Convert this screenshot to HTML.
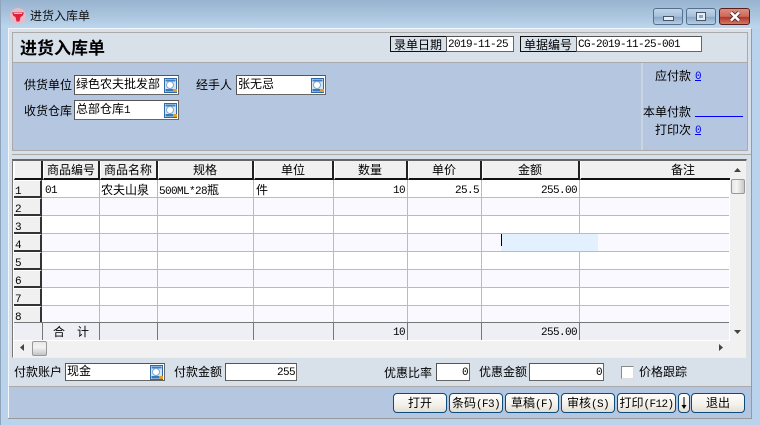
<!DOCTYPE html>
<html><head><meta charset="utf-8"><style>
html,body{margin:0;padding:0;background:#b9d3ec}
#w{position:relative;width:760px;height:425px;overflow:hidden;background:#b9d3ec;font:12px/16px "WenQuanYi Zen Hei","Noto Sans CJK SC",sans-serif;color:#000}
#w div,#w svg{position:absolute}
.r{box-sizing:border-box}
.t{position:absolute;white-space:nowrap;height:16px}
.m{font:11px/16px "Liberation Mono",monospace;letter-spacing:-.6px}
.t.m{margin-top:1px}
.i{background:#fff;box-sizing:border-box;border:1px solid #666;border-top-color:#555;border-left-color:#555}
.lb{box-sizing:border-box;background:#d8e0ea;border:1px solid #111;border-right-color:#fff;border-bottom-color:#111;height:16px;width:57px;text-align:center;line-height:15px;text-indent:-1px}
.h{box-sizing:border-box;top:161px;height:19px;background:#f0f0f0;border-bottom:2px solid #111;border-right:2px solid #222;border-left:1px solid #fff}
.n{box-sizing:border-box;left:14px;width:28px;height:18px;background:#f0f0f0;border-right:2px solid #333;border-bottom:2px solid #333;border-top:1px solid #fff}
.hl{left:42px;width:687px;height:1px;background:#bbb}
.vl{top:180px;width:1px;height:143px;background:#bbb}
.fv{top:323px;width:1px;height:17px;background:#777}
.alt{left:42px;width:687px;height:17px;background:#f9f9ff}
.b{box-sizing:border-box;top:393px;height:20px;border:1px solid #0b4a7a;border-radius:4px;background:linear-gradient(#fdfdfc,#f3f1ea 60%,#e2ded2);text-align:center;line-height:18px}
.th{box-sizing:border-box;background:linear-gradient(90deg,#e6e6e6,#f5f5f5 40%,#c8c8c8);border:1px solid #999;border-radius:2px}
.wb{box-sizing:border-box;top:8px;height:17px;border:1px solid #54708f;border-radius:3px;background:linear-gradient(#c0d4e8,#a6c0da 50%,#8aa8c6 55%,#b6cde2)}
a{color:#00f;text-decoration:underline}
</style></head><body><div id="w">
<svg width="0" height="0" style="left:0;top:0"><defs><symbol id="q" viewBox="0 0 13 15"><rect x=".5" y=".5" width="12" height="14" fill="#d6e6f6" stroke="#2f68a8"/><rect x="1.5" y="1.5" width="10" height="2" fill="#3f7fc0"/><rect x="1.5" y="11" width="10" height="2.5" fill="#3a78b8"/><circle cx="6" cy="7" r="3.5" fill="#fff" stroke="#7fa8d0"/><rect x="9" y="11" width="4" height="3" fill="#e0a030"/></symbol></defs></svg>

<!-- title bar -->
<div style="left:0;top:0;width:760px;height:28px;background:linear-gradient(#98b3cf,#a9c3dc 50%,#bcd6ee)"></div>
<div style="left:0;top:0;width:1px;height:425px;background:#8fa5bb"></div>
<svg style="left:10px;top:8px" width="16" height="16" viewBox="0 0 16 16"><circle cx="8" cy="8" r="8" fill="#e9b9c6"/><path d="M2 4.5h12l-1.5 3.5-2 1-1 4.5h-3l-1-4.5-2-1z" fill="#e0203c"/><path d="M4 5.5h8" stroke="#f6c0c8"/></svg>
<span class="t" style="left:30px;top:8px;color:#111">进货入库单</span>

<div class="wb" style="left:653px;width:30px"></div>
<div style="left:663px;top:16px;width:11px;height:5px;box-sizing:border-box;background:#e8eef4;border:1px solid #46566a"></div>
<div class="wb" style="left:686px;width:30px"></div>
<div style="left:696px;top:12px;width:10px;height:9px;box-sizing:border-box;background:#e8eef4;border:1px solid #46566a"></div>
<div style="left:699px;top:15px;width:4px;height:3px;background:#8aa8c6"></div>
<div class="wb" style="left:719px;width:31px;border-color:#5a1f1c;background:linear-gradient(#dc8d80,#cc6a5c 50%,#b4352a 55%,#cf7a66)"></div>
<svg style="left:728px;top:11px" width="14" height="11" viewBox="0 0 14 11"><path d="M3 1.5l8 8M11 1.5l-8 8" stroke="#4a2a28" stroke-width="4.2"/><path d="M3 1.5l8 8M11 1.5l-8 8" stroke="#fff" stroke-width="2.6"/></svg>

<!-- outer form -->
<div style="left:8px;top:28px;width:744px;height:391px;box-sizing:border-box;background:#d8e0ea;border:1px solid #f4f6f9;border-right-color:#999;border-bottom-color:#999"></div>
<div style="left:12px;top:32px;width:736px;height:119px;box-sizing:border-box;background:#d8e0ea;border:1px solid #aaa"></div>
<div style="left:13px;top:62px;width:734px;height:1px;background:#aaa"></div>
<div style="left:13px;top:63px;width:734px;height:87px;background:#b5c6e0"></div>
<div style="left:641px;top:63px;width:2px;height:87px;background:#ccd4de"></div>
<div style="left:12px;top:154px;width:739px;height:1px;background:#aaa"></div>

<span class="t" style="left:20px;top:37px;height:20px;font:bold 17px/20px 'WenQuanYi Zen Hei','Noto Sans CJK SC',sans-serif">进货入库单</span>

<div class="lb" style="left:390px;top:36px">录单日期</div>
<div class="i" style="left:446px;top:36px;width:68px;height:16px"></div>
<span class="t m" style="left:448px;top:36px">2019-11-25</span>
<div class="lb" style="left:520px;top:36px">单据编号</div>
<div class="i" style="left:576px;top:36px;width:126px;height:16px"></div>
<span class="t m" style="left:578px;top:36px">CG-2019-11-25-001</span>

<span class="t" style="left:24px;top:77px">供货单位</span>
<div class="i" style="left:74px;top:75px;width:105px;height:20px"></div>
<span class="t" style="left:76px;top:76px">绿色农夫批发部</span>
<svg style="left:164px;top:78px" width="13" height="15"><use href="#q"/></svg>
<span class="t" style="left:196px;top:77px">经手人</span>
<div class="i" style="left:236px;top:75px;width:90px;height:20px"></div>
<span class="t" style="left:238px;top:76px">张无忌</span>
<svg style="left:311px;top:78px" width="13" height="15"><use href="#q"/></svg>
<span class="t" style="left:24px;top:103px">收货仓库</span>
<div class="i" style="left:74px;top:100px;width:105px;height:20px"></div>
<span class="t" style="left:76px;top:101px">总部仓库<span class="m">1</span></span>
<svg style="left:164px;top:103px" width="13" height="15"><use href="#q"/></svg>

<span class="t" style="left:655px;top:68px">应付款</span><a class="t m" style="left:695px;top:68px">0</a>
<span class="t" style="left:643px;top:104px">本单付款</span>
<div style="left:695px;top:116px;width:48px;height:1px;background:#00f"></div>
<span class="t" style="left:655px;top:122px">打印次</span><a class="t m" style="left:695px;top:122px">0</a>

<!-- grid -->
<div style="left:12px;top:159px;width:735px;height:199px;box-sizing:border-box;background:#fff;border:1px solid #777;border-right-color:#ddd;border-bottom-color:#eee;border-top:2px solid #666"></div>
<div class="alt" style="top:198px"></div>
<div class="alt" style="top:234px"></div>
<div class="alt" style="top:270px"></div>
<div class="alt" style="top:306px"></div>
<div class="hl" style="top:197px"></div><div class="hl" style="top:215px"></div><div class="hl" style="top:233px"></div><div class="hl" style="top:251px"></div><div class="hl" style="top:269px"></div><div class="hl" style="top:287px"></div><div class="hl" style="top:305px"></div>
<div class="vl" style="left:99px"></div><div class="vl" style="left:157px"></div><div class="vl" style="left:253px"></div><div class="vl" style="left:333px"></div><div class="vl" style="left:407px"></div><div class="vl" style="left:481px"></div><div class="vl" style="left:579px"></div>

<div class="h" style="left:14px;width:29px"></div>
<div class="h" style="left:43px;width:57px"></div>
<div class="h" style="left:100px;width:58px"></div>
<div class="h" style="left:158px;width:96px"></div>
<div class="h" style="left:254px;width:80px"></div>
<div class="h" style="left:334px;width:74px"></div>
<div class="h" style="left:408px;width:74px"></div>
<div class="h" style="left:482px;width:98px"></div>
<div class="h" style="left:580px;width:150px;border-right:0"></div>
<span class="t" style="left:47px;top:162px">商品编号</span>
<span class="t" style="left:104px;top:162px">商品名称</span>
<span class="t" style="left:193px;top:162px">规格</span>
<span class="t" style="left:281px;top:162px">单位</span>
<span class="t" style="left:358px;top:162px">数量</span>
<span class="t" style="left:432px;top:162px">单价</span>
<span class="t" style="left:518px;top:162px">金额</span>
<span class="t" style="left:671px;top:162px">备注</span>

<div class="n" style="top:180px"></div><div class="n" style="top:198px"></div><div class="n" style="top:216px"></div><div class="n" style="top:234px"></div><div class="n" style="top:252px"></div><div class="n" style="top:270px"></div><div class="n" style="top:288px"></div><div class="n" style="top:306px"></div>
<span class="t m" style="left:15px;top:183px">1</span>
<span class="t m" style="left:15px;top:201px">2</span>
<span class="t m" style="left:15px;top:219px">3</span>
<span class="t m" style="left:15px;top:237px">4</span>
<span class="t m" style="left:15px;top:255px">5</span>
<span class="t m" style="left:15px;top:273px">6</span>
<span class="t m" style="left:15px;top:291px">7</span>
<span class="t m" style="left:15px;top:309px">8</span>

<span class="t m" style="left:45px;top:182px">01</span>
<span class="t" style="left:101px;top:182px">农夫山泉</span>
<span class="t" style="left:159px;top:182px"><span class="m">500ML*28</span>瓶</span>
<span class="t" style="left:256px;top:182px">件</span>
<span class="t m" style="right:355px;top:182px">10</span>
<span class="t m" style="right:281px;top:182px">25.5</span>
<span class="t m" style="right:183px;top:182px">255.00</span>

<div style="left:501px;top:234px;width:97px;height:17px;background:#e3f0fd"></div>
<div style="left:501px;top:234px;width:1px;height:12px;background:#000"></div>

<!-- totals -->
<div style="left:14px;top:322px;width:715px;height:1px;background:#777"></div>
<div style="left:14px;top:323px;width:715px;height:17px;background:#eeeef5"></div>
<div class="fv" style="left:42px"></div><div class="fv" style="left:99px"></div><div class="fv" style="left:157px"></div><div class="fv" style="left:253px"></div><div class="fv" style="left:333px"></div><div class="fv" style="left:407px"></div><div class="fv" style="left:481px"></div><div class="fv" style="left:579px"></div>
<span class="t" style="left:53px;top:324px">合</span><span class="t" style="left:77px;top:324px">计</span>
<span class="t m" style="right:355px;top:324px">10</span>
<span class="t m" style="right:183px;top:324px">255.00</span>

<!-- scrollbars -->
<div style="left:730px;top:161px;width:16px;height:180px;background:#f1f1f1"></div>
<div class="th" style="left:731px;top:179px;width:14px;height:15px"></div>
<svg style="left:734px;top:168px" width="8" height="5"><path d="M0 4h7L3.5 0z" fill="#444"/></svg>
<svg style="left:734px;top:330px" width="8" height="5"><path d="M0 0h7L3.5 4z" fill="#444"/></svg>
<div style="left:14px;top:341px;width:732px;height:16px;background:#f1f1f1"></div>
<div class="th" style="left:32px;top:341px;width:15px;height:15px;background:linear-gradient(#e8e8e8,#f4f4f4 40%,#c4c4c4)"></div>
<svg style="left:20px;top:344px" width="5" height="8"><path d="M4 0v7L0 3.5z" fill="#444"/></svg>
<svg style="left:719px;top:344px" width="5" height="8"><path d="M0 0v7L4 3.5z" fill="#444"/></svg>

<!-- bottom form -->
<span class="t" style="left:14px;top:364px">付款账户</span>
<div class="i" style="left:65px;top:363px;width:100px;height:18px"></div>
<span class="t" style="left:67px;top:363px">现金</span>
<svg style="left:150px;top:365px" width="13" height="15"><use href="#q"/></svg>
<span class="t" style="left:174px;top:364px">付款金额</span>
<div class="i" style="left:225px;top:363px;width:72px;height:18px"></div>
<span class="t m" style="right:465px;top:364px">255</span>
<span class="t" style="left:384px;top:365px">优惠比率</span>
<div class="i" style="left:436px;top:363px;width:34px;height:18px"></div>
<span class="t m" style="right:292px;top:364px">0</span>
<span class="t" style="left:479px;top:364px">优惠金额</span>
<div class="i" style="left:529px;top:363px;width:75px;height:18px"></div>
<span class="t m" style="right:158px;top:364px">0</span>
<div style="left:621px;top:366px;width:13px;height:13px;box-sizing:border-box;background:#fff;border:1px solid #8a8a8a;border-right-color:#ddd;border-bottom-color:#ddd"></div>
<span class="t" style="left:639px;top:364px">价格跟踪</span>

<div style="left:9px;top:386px;width:742px;height:1px;background:#aaa"></div>
<div style="left:9px;top:387px;width:742px;height:31px;background:#b5c6e0"></div>
<div style="left:8px;top:418px;width:744px;height:1px;background:#999"></div>

<div class="b" style="left:393px;width:54px">打开</div>
<div class="b" style="left:449px;width:54px">条码<span class="m">(F3)</span></div>
<div class="b" style="left:505px;width:54px">草稿<span class="m">(F)</span></div>
<div class="b" style="left:561px;width:54px">审核<span class="m">(S)</span></div>
<div class="b" style="left:617px;width:59px">打印<span class="m">(F12)</span></div>
<div class="b" style="left:678px;width:12px">
</div>
<svg style="left:681px;top:397px" width="6" height="13"><path d="M3 0v9" stroke="#000"/><path d="M0.5 8h5L3 12z" fill="#000"/></svg>
<div class="b" style="left:691px;width:54px">退出</div>
</div></body></html>
